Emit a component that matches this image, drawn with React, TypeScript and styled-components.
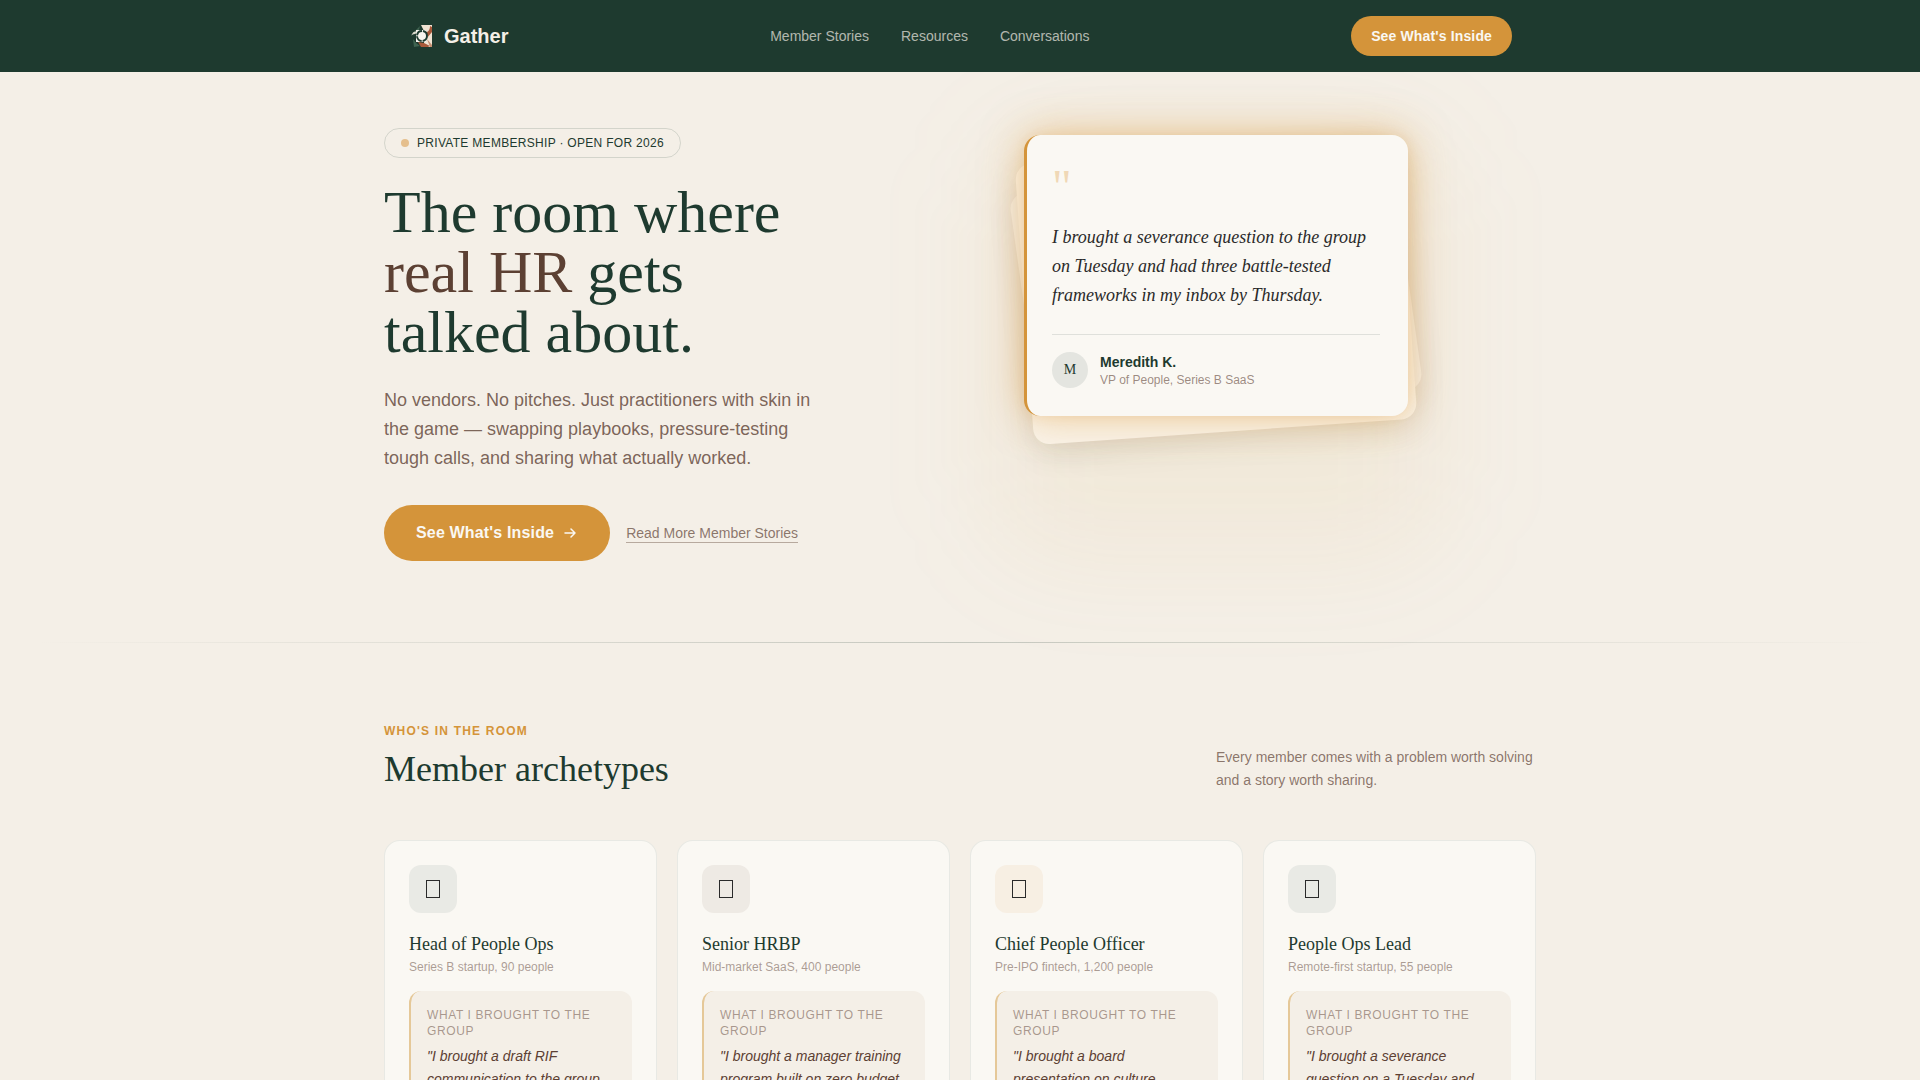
import React from "react";
import styled, { createGlobalStyle } from "styled-components";

const sans = '"Liberation Sans", Arial, sans-serif';
const serif = '"Liberation Serif", "Times New Roman", serif';

const color = {
  forest: "#1e3a2f",
  amber: "#d4943a",
  cream: "#f4efe7",
  paper: "#faf8f3",
  cocoa: "#5c4033",
  ink: "#2a2a2a",
};

const GlobalStyle = createGlobalStyle`
  *, *::before, *::after { box-sizing: border-box; }
  html { scrollbar-width: none; }
  body {
    margin: 0;
    background: ${color.cream};
    color: ${color.cocoa};
    font-family: ${sans};
  }
  h1, h2, h3, p, blockquote, figure { margin: 0; font-weight: 400; }
  a { color: inherit; text-decoration: none; }
`;

const Header = styled.header`
  position: relative;
  z-index: 1;
  background: ${color.forest};
`;

const HeaderInner = styled.div`
  max-width: 1152px;
  margin: 0 auto;
  padding: 16px 24px;
  display: flex;
  align-items: center;
  justify-content: space-between;
`;

const Brand = styled.a`
  display: flex;
  align-items: center;
  gap: 8px;
  color: ${color.cream};
  font-size: 20px;
  line-height: 28px;
  font-weight: 700;
`;

const Nav = styled.nav`
  display: flex;
  gap: 32px;
  font-size: 14px;
  line-height: 20px;
  color: rgba(245, 240, 232, 0.7);
`;

const Button = styled.button<{ $large?: boolean }>`
  display: inline-flex;
  align-items: center;
  gap: 8px;
  border: 0;
  border-radius: 999px;
  background: ${color.amber};
  color: ${color.paper};
  font-family: ${sans};
  font-weight: 700;
  font-size: ${(p) => (p.$large ? 16 : 14)}px;
  line-height: ${(p) => (p.$large ? 24 : 20)}px;
  letter-spacing: 0.01em;
  padding: ${(p) => (p.$large ? "16px 32px" : "10px 20px")};
  cursor: pointer;
`;

const Hero = styled.section`
  padding: 56px 24px 80px;
`;

const HeroGrid = styled.div`
  max-width: 1152px;
  min-height: 434px;
  margin: 0 auto;
  display: grid;
  grid-template-columns: 1fr 1fr;
  gap: 64px;
  align-items: center;
`;

const HeroCopy = styled.div`
  align-self: start;
`;

const Pill = styled.p`
  display: flex;
  width: fit-content;
  align-items: center;
  gap: 8px;
  padding: 6px 16px;
  border: 1px solid rgba(30, 58, 47, 0.15);
  border-radius: 999px;
  color: ${color.forest};
  font-size: 12px;
  line-height: 16px;
  letter-spacing: 0.3px;
  text-transform: uppercase;
`;

const Dot = styled.span`
  width: 8px;
  height: 8px;
  border-radius: 50%;
  background: #e5bf8d;
`;

const Title = styled.h1`
  margin: 24px 0;
  max-width: 448px;
  font-family: ${serif};
  font-size: 60px;
  line-height: 60px;
  color: ${color.forest};
`;

const Accent = styled.span`
  color: ${color.cocoa};
`;

const Lead = styled.p`
  max-width: 448px;
  margin-bottom: 32px;
  font-size: 18px;
  line-height: 29px;
  color: rgba(92, 64, 51, 0.8);
`;

const Actions = styled.div`
  display: flex;
  align-items: center;
  gap: 16px;
`;

const TextLink = styled.a`
  font-size: 14px;
  line-height: 18px;
  color: rgba(92, 64, 51, 0.7);
  border-bottom: 1px solid rgba(92, 64, 51, 0.4);
`;

const Stage = styled.div`
  position: relative;
  width: 100%;
  max-width: 448px;
  height: 420px;
  padding: 0 32px;

  &::before {
    content: "";
    position: absolute;
    inset: 0;
    border-radius: 64px;
    background: rgba(212, 160, 70, 0.08);
    filter: blur(56px);
  }
`;

const Stack = styled.div`
  position: relative;
`;

const BackCard = styled.div<{ $turn: number; $top: number; $bottom: number; $tone: string; $shade: number }>`
  position: absolute;
  inset: ${(p) => p.$top}px 0 ${(p) => p.$bottom}px;
  border-radius: 16px;
  background: ${(p) => p.$tone};
  box-shadow: 0 8px 32px rgba(92, 64, 51, ${(p) => p.$shade});
  transform: rotate(${(p) => p.$turn}deg);
`;

const QuoteCard = styled.figure`
  position: relative;
  padding: 28px 28px 28px 25px;
  border-left: 3px solid ${color.amber};
  border-radius: 16px;
  background: ${color.paper};
  box-shadow: 0 0 40px rgba(222, 154, 58, 0.5), 0 0 12px rgba(222, 154, 58, 0.12);
`;

const QuoteMark = styled.div`
  font-family: ${serif};
  font-size: 48px;
  line-height: 48px;
  color: #f0d8b6;
`;

const QuoteText = styled.blockquote`
  margin: 12px 0 24px;
  font-family: ${serif};
  font-size: 18px;
  line-height: 29px;
  font-style: italic;
  color: ${color.ink};
`;

const Person = styled.figcaption`
  display: flex;
  align-items: center;
  gap: 12px;
  padding-top: 17px;
  border-top: 1px solid rgba(30, 58, 47, 0.12);
`;

const Avatar = styled.span`
  width: 36px;
  height: 36px;
  border-radius: 50%;
  display: grid;
  place-items: center;
  background: #e4e5e0;
  font-family: ${serif};
  font-size: 14px;
  color: ${color.forest};
`;

const PersonName = styled.p`
  font-size: 14px;
  line-height: 20px;
  font-weight: 700;
  color: ${color.forest};
`;

const PersonRole = styled.p`
  font-size: 12px;
  line-height: 16px;
  color: rgba(92, 64, 51, 0.6);
`;

const Divider = styled.hr`
  height: 1px;
  margin: 0 32px;
  border: 0;
  background: linear-gradient(to right, transparent, rgba(30, 58, 47, 0.22), transparent);
`;

const Members = styled.section`
  padding: 80px 24px;
`;

const MembersInner = styled.div`
  max-width: 1152px;
  margin: 0 auto;
`;

const SectionHead = styled.div`
  display: flex;
  align-items: flex-end;
  justify-content: space-between;
  margin-bottom: 48px;
`;

const Eyebrow = styled.p`
  margin-bottom: 8px;
  font-size: 12px;
  line-height: 16px;
  font-weight: 700;
  letter-spacing: 0.1em;
  text-transform: uppercase;
  color: ${color.amber};
`;

const SectionTitle = styled.h2`
  font-family: ${serif};
  font-size: 36px;
  line-height: 45px;
  color: ${color.forest};
`;

const SectionNote = styled.p`
  max-width: 320px;
  font-size: 14px;
  line-height: 23px;
  color: rgba(92, 64, 51, 0.7);
`;

const Cards = styled.div`
  display: grid;
  grid-template-columns: repeat(4, 1fr);
  gap: 20px;
`;

const Card = styled.article`
  padding: 24px;
  border: 1px solid rgba(30, 58, 47, 0.08);
  border-radius: 16px;
  background: ${color.paper};
`;

const IconTile = styled.div<{ $tone: string }>`
  width: 48px;
  height: 48px;
  margin-bottom: 20px;
  border-radius: 12px;
  display: grid;
  place-items: center;
  background: ${(p) => p.$tone};
`;

const Glyph = styled.span`
  width: 14px;
  height: 18px;
  border: 1px solid ${color.ink};
`;

const CardTitle = styled.h3`
  font-family: ${serif};
  font-size: 18px;
  line-height: 22px;
  color: ${color.forest};
`;

const CardMeta = styled.p`
  margin: 4px 0 16px;
  font-size: 12px;
  line-height: 16px;
  color: rgba(92, 64, 51, 0.5);
`;

const Brought = styled.div`
  padding: 16px;
  border-left: 2px solid #e5c898;
  border-radius: 12px;
  background: ${color.cream};
`;

const BroughtLabel = styled.p`
  margin-bottom: 6px;
  font-size: 12px;
  line-height: 16px;
  letter-spacing: 0.05em;
  text-transform: uppercase;
  color: rgba(92, 64, 51, 0.5);
`;

const BroughtText = styled.p`
  font-size: 14px;
  line-height: 23px;
  font-style: italic;
  color: ${color.cocoa};
`;

const members = [
  { role: "Head of People Ops", meta: "Series B startup, 90 people", tone: "#e9eae5", text: '"I brought a draft RIF communication to the group before sending it."' },
  { role: "Senior HRBP", meta: "Mid-market SaaS, 400 people", tone: "#eeeae4", text: '"I brought a manager training program built on zero budget and left with a plan."' },
  { role: "Chief People Officer", meta: "Pre-IPO fintech, 1,200 people", tone: "#f7efe3", text: '"I brought a board presentation on culture measurement."' },
  { role: "People Ops Lead", meta: "Remote-first startup, 55 people", tone: "#e9eae5", text: '"I brought a severance question on a Tuesday and had three frameworks by Thursday."' },
];

const Logo = () => (
  <svg width="28" height="28" viewBox="0 0 28 28" aria-hidden="true">
    <path d="M13 3h11v22h-8V9z" fill="#f1e3d3" />
    <path d="M22 4l2 1v5l-5 6-2-5c3-1 5-3 5-7z" fill="#a8593a" />
    <path d="M10 20l6 1 6 3-2 1h-7z" fill="#a8593a" />
    <path d="M19 17l5 6v2h-2z" fill="#c58f72" />
    <path d="M3 15c1-5 4-7 9-6l-5 3c-2 0-4 1-4 3z" fill="#d9d8cb" />
    <path d="M6 10l6-6-1 4z" fill="#3f6350" />
    <path d="M5 17l3 4 4 3-6 1z" fill="#3f6350" />
    <path d="M8 8h10v3l2 3-2 6H8z" fill="#f7f4ee" />
    <circle cx="14" cy="14" r="5" fill="#f7f4ee" stroke="#1e3a2f" strokeWidth="2" strokeDasharray="7 1" />
  </svg>
);

const Arrow = () => (
  <svg width="16" height="16" viewBox="0 0 16 16" fill="none" stroke="currentColor" strokeWidth="1.5" strokeLinecap="round" strokeLinejoin="round" aria-hidden="true">
    <path d="M3 8h10M9 4l4 4-4 4" />
  </svg>
);

export default function App() {
  return (
    <>
      <GlobalStyle />
      <Header>
        <HeaderInner>
          <Brand href="#">
            <Logo />
            Gather
          </Brand>
          <Nav>
            <a href="#stories">Member Stories</a>
            <a href="#resources">Resources</a>
            <a href="#conversations">Conversations</a>
          </Nav>
          <Button type="button">See What's Inside</Button>
        </HeaderInner>
      </Header>
      <main>
        <Hero>
          <HeroGrid>
            <HeroCopy>
              <Pill>
                <Dot />
                Private membership · Open for 2026
              </Pill>
              <Title>
                The room where <Accent>real HR</Accent> gets talked about.
              </Title>
              <Lead>
                No vendors. No pitches. Just practitioners with skin in the game — swapping playbooks,
                pressure-testing tough calls, and sharing what actually worked.
              </Lead>
              <Actions>
                <Button type="button" $large>
                  See What's Inside
                  <Arrow />
                </Button>
                <TextLink href="#stories">Read More Member Stories</TextLink>
              </Actions>
            </HeroCopy>
            <Stage>
              <Stack>
                <BackCard $turn={-8} $top={32} $bottom={0} $tone="#faf4ea" $shade={0.06} />
                <BackCard $turn={-4} $top={16} $bottom={-16} $tone="#faf4ea" $shade={0.1} />
                <QuoteCard>
                  <QuoteMark>"</QuoteMark>
                  <QuoteText>
                    I brought a severance question to the group on Tuesday and had three battle-tested
                    frameworks in my inbox by Thursday.
                  </QuoteText>
                  <Person>
                    <Avatar>M</Avatar>
                    <div>
                      <PersonName>Meredith K.</PersonName>
                      <PersonRole>VP of People, Series B SaaS</PersonRole>
                    </div>
                  </Person>
                </QuoteCard>
              </Stack>
            </Stage>
          </HeroGrid>
        </Hero>
        <Divider />
        <Members id="stories">
          <MembersInner>
            <SectionHead>
              <div>
                <Eyebrow>Who's in the room</Eyebrow>
                <SectionTitle>Member archetypes</SectionTitle>
              </div>
              <SectionNote>Every member comes with a problem worth solving and a story worth sharing.</SectionNote>
            </SectionHead>
            <Cards>
              {members.map((m) => (
                <Card key={m.role}>
                  <IconTile $tone={m.tone}>
                    <Glyph />
                  </IconTile>
                  <CardTitle>{m.role}</CardTitle>
                  <CardMeta>{m.meta}</CardMeta>
                  <Brought>
                    <BroughtLabel>What I brought to the group</BroughtLabel>
                    <BroughtText>{m.text}</BroughtText>
                  </Brought>
                </Card>
              ))}
            </Cards>
          </MembersInner>
        </Members>
      </main>
    </>
  );
}
